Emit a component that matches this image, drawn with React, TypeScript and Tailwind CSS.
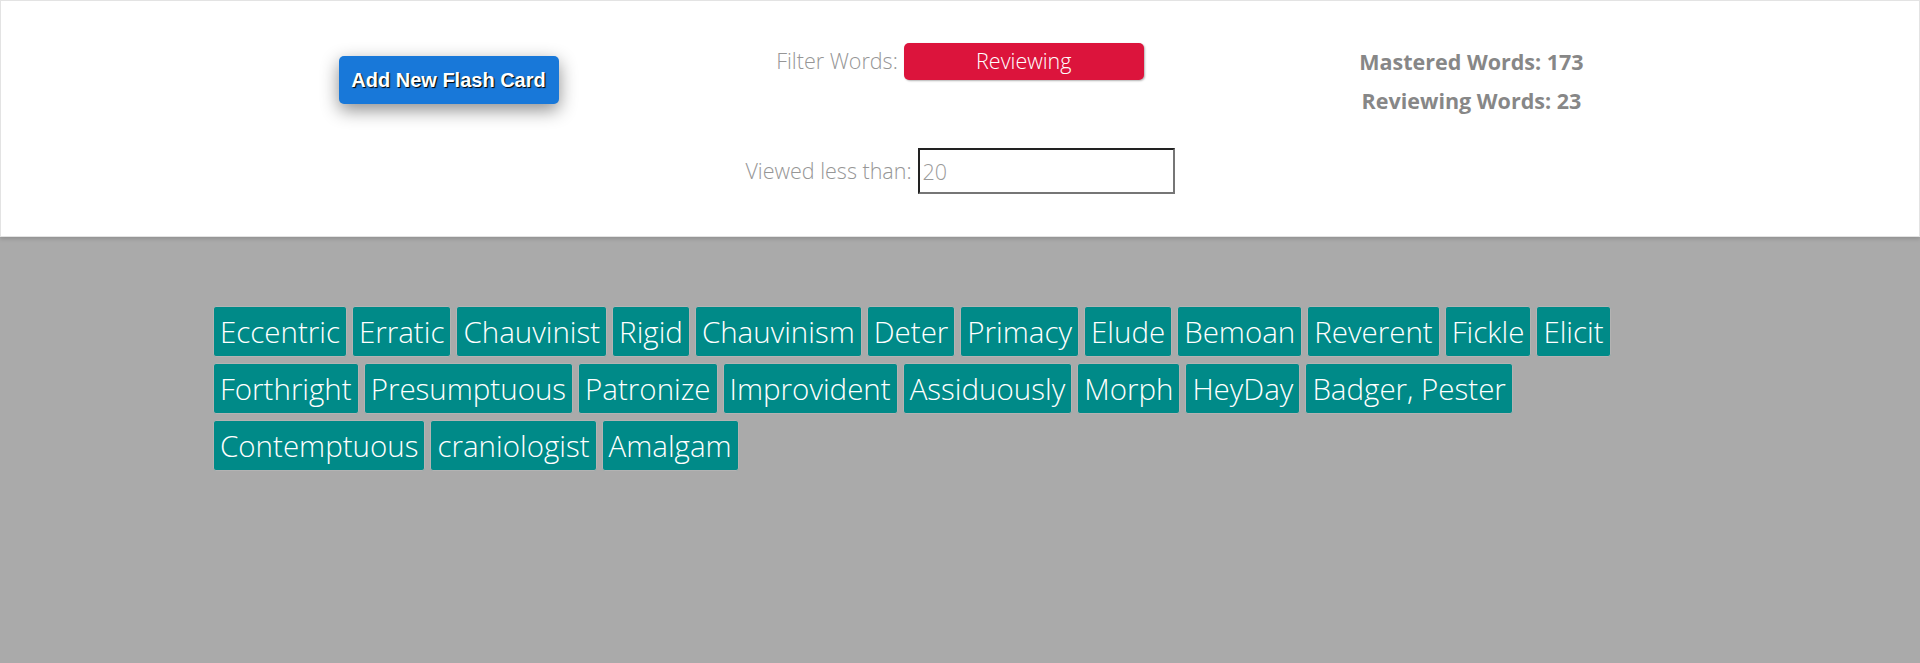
const words = [
  "Eccentric",
  "Erratic",
  "Chauvinist",
  "Rigid",
  "Chauvinism",
  "Deter",
  "Primacy",
  "Elude",
  "Bemoan",
  "Reverent",
  "Fickle",
  "Elicit",
  "Forthright",
  "Presumptuous",
  "Patronize",
  "Improvident",
  "Assiduously",
  "Morph",
  "HeyDay",
  "Badger, Pester",
  "Contemptuous",
  "craniologist",
  "Amalgam",
];

function Header() {
  return (
    <header className="h-[237px] bg-white border border-[#e3e3e3] shadow-[0_2px_4px_rgba(0,0,0,0.15)]">
      <div className="mx-auto w-4/5 grid grid-cols-3 pt-[41px]">
        <div className="flex justify-center pt-[14px]">
          <button className="w-[220px] h-[48px] rounded-[5px] bg-[#1878d9] text-white text-[20px] font-bold font-['Liberation_Sans',Arial,sans-serif] [text-shadow:1px_1px_1px_#000] shadow-[0_6px_18px_rgba(0,0,0,0.45)]">
            Add New Flash Card
          </button>
        </div>

        <div className="flex flex-col items-center font-['Open_Sans',sans-serif] font-light text-[21.5px] text-[#969696]">
          <div className="flex items-center gap-[6px] h-[37px] mt-[1px]">
            <span>Filter Words:</span>
            <button className="w-[240px] h-[37px] rounded-[5px] bg-[#dc143c] text-white font-light shadow-[1px_1px_2px_rgba(0,0,0,0.3)]">
              Reviewing
            </button>
          </div>
          <div className="flex items-center gap-[6px] mt-[68px]">
            <span>Viewed less than:</span>
            <input
              defaultValue="20"
              className="w-[257px] h-[46px] px-[3px] border-2 border-t-[#222] border-l-[#222] border-b-[#767676] border-r-[#767676] text-[#9a9a9a] font-light outline-none"
            />
          </div>
        </div>

        <div className="flex flex-col items-center font-['Open_Sans',sans-serif] font-bold text-[21.5px] leading-[39px] text-[#878787]">
          <span>Mastered Words: 173</span>
          <span>Reviewing Words: 23</span>
        </div>
      </div>
    </header>
  );
}

export default function App() {
  return (
    <div className="min-h-[663px] bg-[#aaaaaa] font-['Open_Sans',sans-serif]">
      <Header />
      <div className="px-[213px] pt-[69px] flex flex-wrap gap-x-[5px] gap-y-[6px]">
        {words.map((w) => (
          <span
            key={w}
            className="px-[6px] py-[5px] leading-[39px] text-[29.5px] font-light text-white bg-[#008a88] rounded-[3px] border border-[#b3b3b3]"
          >
            {w}
          </span>
        ))}
      </div>
    </div>
  );
}
